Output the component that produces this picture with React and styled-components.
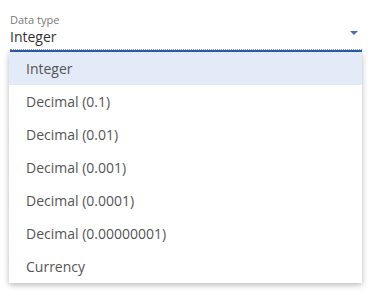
import React from 'react';
import styled, { createGlobalStyle } from 'styled-components';

const GlobalStyle = createGlobalStyle`
    body {
        margin: 0;
        background: #ffffff;
        font-family: "Open Sans", "Noto Sans", sans-serif;
    }
`;

const Page = styled.div`
    width: 377px;
    height: 291px;
    padding: 12px 15px 0 10px;
    box-sizing: border-box;
    position: relative;
    overflow: hidden;
`;

const Field = styled.div`
    position: relative;
    width: 352px;
`;

const Label = styled.div`
    font-size: 11px;
    line-height: 15px;
    color: #7a7a7a;
`;

const ValueRow = styled.div`
    display: flex;
    align-items: center;
    justify-content: space-between;
    height: 19px;
    padding-bottom: 3px;
    border-bottom: 1px dotted #9a9a9a;
`;

const Value = styled.span`
    font-size: 14px;
    line-height: 19px;
    color: #333333;
`;

const Caret = styled.svg`
    align-self: flex-start;
    width: 8px;
    height: 4px;
    margin: 4px 4px 0 0;
`;

const FocusLine = styled.div`
    height: 2px;
    background: #2b5fb4;
`;

const Menu = styled.ul`
    position: absolute;
    top: 100%;
    left: -1px;
    right: 0;
    margin: 0;
    padding: 0;
    list-style: none;
    background: #ffffff;
    box-shadow: 0 2px 6px rgba(0, 0, 0, 0.28);
    z-index: 2;
`;

const Item = styled.li`
    height: 33px;
    display: flex;
    align-items: center;
    padding-left: 17px;
    font-size: 14px;
    color: #555555;
    background: ${p => (p.$selected ? '#e3eaf8' : 'transparent')};
`;

const options = [
    'Integer',
    'Decimal (0.1)',
    'Decimal (0.01)',
    'Decimal (0.001)',
    'Decimal (0.0001)',
    'Decimal (0.00000001)',
    'Currency',
];

export default function App() {
    return (
        <>
            <GlobalStyle />
            <Page>
                <Field>
                    <Label>Data type</Label>
                    <ValueRow>
                        <Value>Integer</Value>
                        <Caret viewBox="0 0 8 4">
                            <path d="M0 0 L8 0 L4 4 Z" fill="#4a6ea8" />
                        </Caret>
                    </ValueRow>
                    <FocusLine />
                    <Menu>
                        {options.map((o, i) => (
                            <Item key={o} $selected={i === 0}>{o}</Item>
                        ))}
                    </Menu>
                </Field>
            </Page>
        </>
    );
}
